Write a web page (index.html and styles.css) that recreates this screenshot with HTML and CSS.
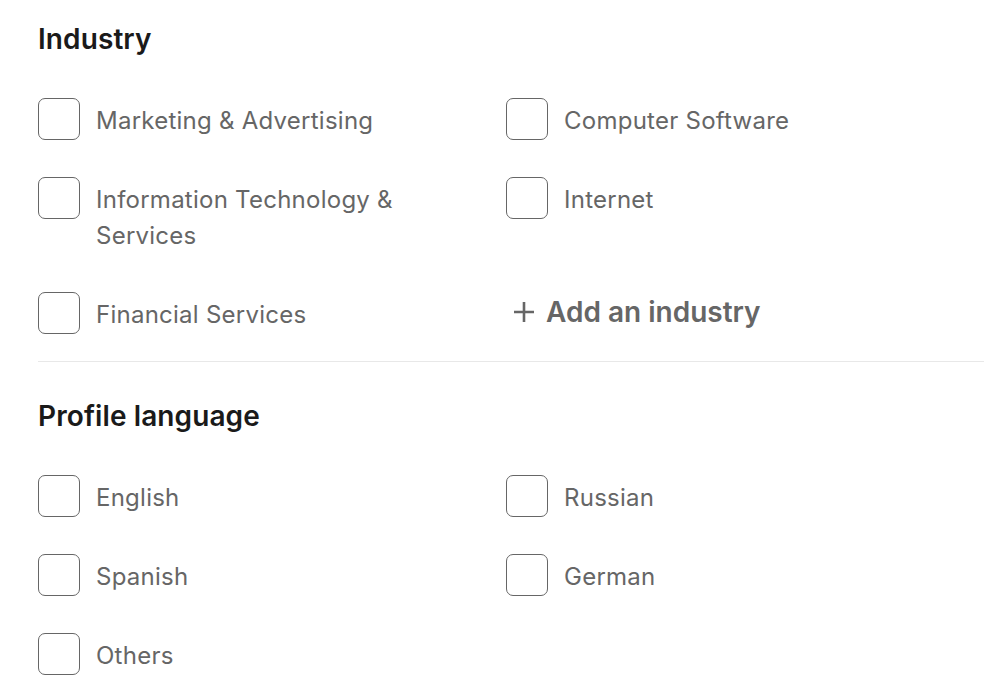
FILE: index.html
```html
<!DOCTYPE html>
<html lang="en">
<head>
  <meta charset="UTF-8">
  <title>Filters</title>
  <link rel="stylesheet" href="styles.css">
</head>
<body>
  <div class="filters">
    <section class="filter-section">
      <h2>Industry</h2>
      <div class="option-grid">
        <label class="option"><span class="box"></span><span class="option-text">Marketing &amp; Advertising</span></label>
        <label class="option"><span class="box"></span><span class="option-text">Computer Software</span></label>
        <label class="option"><span class="box"></span><span class="option-text">Information Technology &amp; Services</span></label>
        <label class="option"><span class="box"></span><span class="option-text">Internet</span></label>
        <label class="option"><span class="box"></span><span class="option-text">Financial Services</span></label>
        <button class="add-btn">
          <svg class="plus" viewBox="0 0 24 24" width="24" height="24"><path d="M12 2v20M2 12h20" stroke="currentColor" stroke-width="2.6" fill="none"/></svg>
          Add an industry
        </button>
      </div>
    </section>

    <section class="filter-section language">
      <h2>Profile language</h2>
      <div class="option-grid">
        <label class="option"><span class="box"></span><span class="option-text">English</span></label>
        <label class="option"><span class="box"></span><span class="option-text">Russian</span></label>
        <label class="option"><span class="box"></span><span class="option-text">Spanish</span></label>
        <label class="option"><span class="box"></span><span class="option-text">German</span></label>
        <label class="option"><span class="box"></span><span class="option-text">Others</span></label>
      </div>
    </section>
  </div>
</body>
</html>
```

FILE: styles.css
```css
body {
  margin: 0;
  font-family: Inter, "Liberation Sans", sans-serif;
  background-color: #fff;
  color: #666;
}

.filters {
  padding-left: 38px;
}

.filter-section {
  padding: 22px 0 26px;
  border-bottom: 1px solid #e8e8e8;
}

.filter-section.language {
  padding-top: 37px;
  border-bottom: none;
}

h2 {
  margin: 0 0 42px;
  font-size: 28px;
  font-weight: 600;
  line-height: 34px;
  letter-spacing: 0.1px;
  color: #1a1a1a;
}

.option-grid {
  display: grid;
  grid-template-columns: 468px 1fr;
  row-gap: 36px;
  align-items: start;
}

.option {
  display: flex;
  align-items: flex-start;
  cursor: pointer;
}

.box {
  flex: none;
  width: 40px;
  height: 40px;
  border: 1.5px solid #666;
  border-radius: 7px;
  margin-right: 16px;
}

.option-text {
  font-size: 24px;
  line-height: 36px;
  letter-spacing: 0.25px;
  padding: 5px 0 2px;
  max-width: 330px;
}

.add-btn {
  display: flex;
  align-items: center;
  gap: 10px;
  background: none;
  border: none;
  padding: 0 0 0 6px;
  margin-top: 3px;
  font-family: inherit;
  font-size: 28px;
  font-weight: 600;
  color: #666;
  cursor: pointer;
  justify-self: start;
}
```
